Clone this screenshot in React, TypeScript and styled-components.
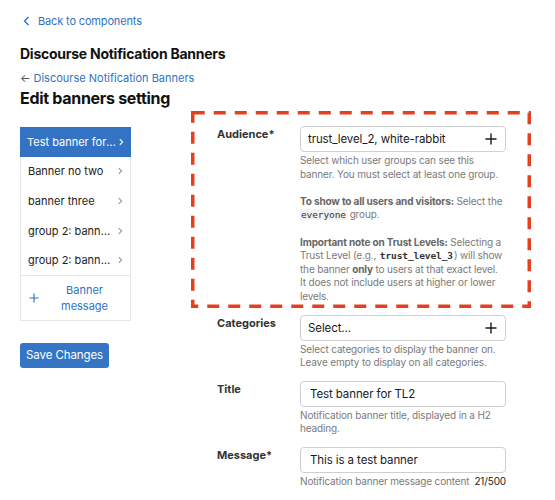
import React from 'react';
import styled, { createGlobalStyle } from 'styled-components';

const GlobalStyle = createGlobalStyle`
  html, body {
    margin: 0;
    padding: 0;
    background: #ffffff;
    font-family: Inter, 'Noto Sans', sans-serif;
    color: #222222;
  }
`;

const BLUE = '#2f72c4';

const Page = styled.div`
  position: relative;
  width: 555px;
  height: 500px;
  padding: 12px 0 0 20px;
  box-sizing: border-box;
  overflow: hidden;
`;

const BackLink = styled.a`
  display: flex;
  align-items: center;
  gap: 8px;
  font-size: 11px;
  letter-spacing: -0.15px;
  line-height: 18px;
  color: ${BLUE};
  text-decoration: none;
  padding-left: 3px;
`;

const PluginTitle = styled.h2`
  margin: 14px 0 0;
  font-size: 14px;
  letter-spacing: -0.25px;
  line-height: 20px;
  font-weight: 700;
  color: #111;
`;

const Crumb = styled.div`
  margin-top: 6px;
  display: flex;
  align-items: center;
  gap: 3px;
  font-size: 11px;
  line-height: 16px;
  color: ${BLUE};
`;

const CrumbArrow = styled.span`
  color: #555;
  font-size: 11px;
`;

const PageTitle = styled.h1`
  margin: 1px 0 0;
  font-size: 16px;
  letter-spacing: -0.3px;
  line-height: 22px;
  font-weight: 700;
  color: #111;
`;

const Main = styled.div`
  display: flex;
  align-items: flex-start;
  margin-top: 17px;
`;

const LeftCol = styled.div`
  width: 111px;
  margin-top: 1px;
  display: flex;
  flex-direction: column;
`;

const Sidebar = styled.div`
  border: 1px solid #e6e6e6;
  border-top: none;
  display: flex;
  flex-direction: column;
`;

const Item = styled.div<{ $active?: boolean }>`
  height: 29.6px;
  display: flex;
  align-items: center;
  justify-content: space-between;
  padding: 0 6px 0 7px;
  font-size: 11px;
  background: ${p => (p.$active ? '#3473c4' : 'transparent')};
  color: ${p => (p.$active ? '#ffffff' : '#222')};
  margin: ${p => (p.$active ? '0 -1px' : '0')};
`;

const ItemText = styled.span`
  white-space: nowrap;
  overflow: hidden;
  text-overflow: ellipsis;
  flex: 1;
`;

const Chevron = styled.span<{ $active?: boolean }>`
  color: ${p => (p.$active ? '#ffffff' : '#999')};
  margin-left: 1px;
  display: flex;
`;

const AddButton = styled.div`
  border-top: 1px solid #e6e6e6;
  height: 44px;
  display: flex;
  align-items: center;
  color: ${BLUE};
  font-size: 11px;
  line-height: 16px;
  padding-left: 8px;
`;

const AddLabel = styled.span`
  flex: 1;
  text-align: center;
`;

const SaveButton = styled.button`
  margin-top: 22px;
  width: 89px;
  height: 25px;
  border: none;
  border-radius: 3px;
  background: #3575c5;
  color: #ffffff;
  font-family: Inter, sans-serif;
  font-size: 11.5px;
  letter-spacing: -0.1px;
  padding: 0;
`;

const Form = styled.div`
  margin-left: 86px;
  display: flex;
  flex-direction: column;
  gap: 11px;
`;

const Row = styled.div`
  display: flex;
  align-items: flex-start;
`;

const Label = styled.div`
  width: 83px;
  font-size: 11px;
  font-weight: 700;
  color: #333;
  line-height: 16px;
`;

const Control = styled.div`
  width: 206px;
  display: flex;
  flex-direction: column;
`;

const Input = styled.div<{ $pad?: number }>`
  height: 26px;
  box-sizing: border-box;
  border: 1px solid #cfcfcf;
  border-radius: 4px;
  display: flex;
  align-items: center;
  justify-content: space-between;
  padding: 0 8px 0 ${p => p.$pad ?? 7}px;
  font-size: 11.5px;
  letter-spacing: -0.1px;
  color: #1a1a1a;
`;

const Help = styled.div`
  margin-top: 2px;
  font-size: 10px;
  letter-spacing: -0.15px;
  line-height: 13.6px;
  color: #7a7a7a;

  p {
    margin: 0 0 13.6px;
  }
  p:last-child {
    margin-bottom: 0;
  }
  b {
    color: #666;
    font-weight: 700;
  }
`;

const HelpRow = styled(Help)`
  display: flex;
  justify-content: space-between;
`;

const Counter = styled.span`
  color: #222;
`;

const Code = styled.code<{ $bold?: boolean }>`
  font-family: 'DejaVu Sans Mono', monospace;
  font-size: 9.5px;
  line-height: 1;
  letter-spacing: -0.1px;
  background: ${p => (p.$bold ? 'transparent' : '#f2f2f2')};
  color: #333;
  font-weight: ${p => (p.$bold ? 700 : 400)};
  padding: 0 1px;
`;

const Highlight = styled.svg`
  position: absolute;
  left: 191px;
  top: 111px;
  pointer-events: none;
`;

const ChevronRight = ({ size = 8 }: { size?: number }) => (
  <svg width={size} height={size} viewBox="0 0 10 10" fill="none" stroke="currentColor" strokeWidth="1.4">
    <path d="M3.5 1.5 L7 5 L3.5 8.5" />
  </svg>
);

const Plus = ({ size = 12 }: { size?: number }) => (
  <svg width={size} height={size} viewBox="0 0 12 12" stroke="currentColor" strokeWidth="1.4">
    <path d="M6 0.5 V11.5 M0.5 6 H11.5" />
  </svg>
);

const banners = [
  'Test banner for TL2',
  'Banner no two',
  'banner three',
  'group 2: banner one',
  'group 2: banner two',
];

export default function App() {
  return (
    <Page>
      <GlobalStyle />
      <BackLink>
        <svg width="7" height="10" viewBox="0 0 7 10" fill="none" stroke="currentColor" strokeWidth="1.4">
          <path d="M5.5 1 L1.5 5 L5.5 9" />
        </svg>
        Back to components
      </BackLink>
      <PluginTitle>Discourse Notification Banners</PluginTitle>
      <Crumb>
        <CrumbArrow>←</CrumbArrow>
        Discourse Notification Banners
      </Crumb>
      <PageTitle>Edit banners setting</PageTitle>

      <Main>
        <LeftCol>
          <Sidebar>
            {banners.map((b, i) => (
              <Item key={b + i} $active={i === 0}>
                <ItemText>{b}</ItemText>
                <Chevron $active={i === 0}>
                  <ChevronRight />
                </Chevron>
              </Item>
            ))}
            <AddButton>
              <Plus size={10} />
              <AddLabel>
                Banner
                <br />
                message
              </AddLabel>
            </AddButton>
          </Sidebar>
          <SaveButton>Save Changes</SaveButton>
        </LeftCol>

        <Form>
          <Row>
            <Label>Audience*</Label>
            <Control>
              <Input>
                trust_level_2, white-rabbit
                <Plus />
              </Input>
              <Help>
                <p>Select which user groups can see this banner. You must select at least one group.</p>
                <p>
                  <b>To show to all users and visitors:</b> Select the <Code>everyone</Code> group.
                </p>
                <p>
                  <b>Important note on Trust Levels:</b> Selecting a Trust Level (e.g.,{' '}
                  <Code $bold>trust_level_3</Code>) will show the banner <b>only</b> to users at that exact level.
                  It does not include users at higher or lower levels.
                </p>
              </Help>
            </Control>
          </Row>

          <Row>
            <Label>Categories</Label>
            <Control>
              <Input>
                Select...
                <Plus />
              </Input>
              <Help>
                Select categories to display the banner on. Leave empty to display on all categories.
              </Help>
            </Control>
          </Row>

          <Row>
            <Label>Title</Label>
            <Control>
              <Input $pad={9}>Test banner for TL2</Input>
              <Help>Notification banner title, displayed in a H2 heading.</Help>
            </Control>
          </Row>

          <Row>
            <Label>Message*</Label>
            <Control>
              <Input $pad={9}>This is a test banner</Input>
              <HelpRow>
                <span>Notification banner message content</span>
                <Counter>21/500</Counter>
              </HelpRow>
            </Control>
          </Row>
        </Form>
      </Main>

      <Highlight width="340" height="197" viewBox="0 0 340 197">
        <rect
          x="1.75"
          y="1.75"
          width="336.5"
          height="193.5"
          fill="none"
          stroke="#e3401f"
          strokeWidth="3.5"
          strokeDasharray="12 9"
        />
      </Highlight>
    </Page>
  );
}
